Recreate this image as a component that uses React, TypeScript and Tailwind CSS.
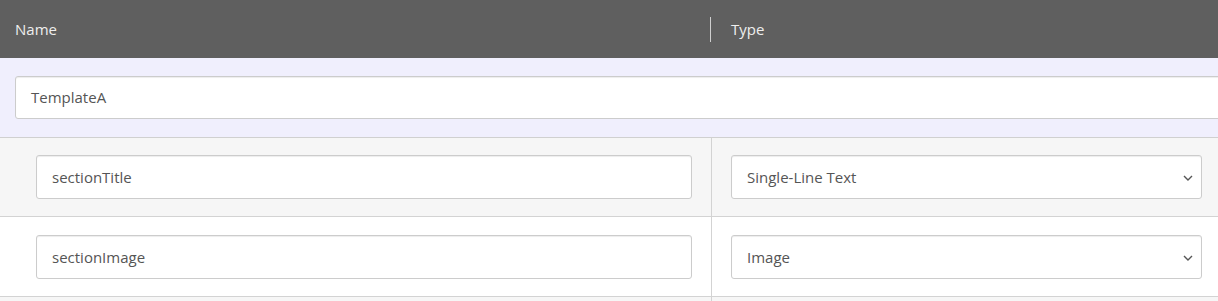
import React from "react";

const font = { fontFamily: '"Open Sans", "Noto Sans", sans-serif' };

function Chevron() {
  return (
    <svg width="10" height="6" viewBox="0 0 10 6" className="absolute right-[8px] top-[19px]">
      <path d="M1 1 L5 5 L9 1" fill="none" stroke="#555" strokeWidth="1.4" />
    </svg>
  );
}

function Row({ name, type, bg, pt, h }: { name: string; type: string; bg: string; pt: string; h: string }) {
  return (
    <div className={`flex ${h} border-b border-[#d3d3d3] ${bg}`}>
      <div className={`w-[711px] shrink-0 pl-[36px] pr-[19px] ${pt}`}>
        <div className="h-[44px] rounded-[3px] border border-[#cccccc] bg-white pl-[15px] flex items-center text-[15px] text-[#555555] shadow-[inset_0_1px_1px_rgba(0,0,0,0.075)]">
          {name}
        </div>
      </div>
      <div className={`flex-1 border-l border-[#d3d3d3] pl-[19px] ${pt}`}>
        <div className="relative w-[471px] h-[44px] rounded-[3px] border border-[#cccccc] bg-white pl-[15px] flex items-center text-[15px] text-[#555555] shadow-[inset_0_1px_1px_rgba(0,0,0,0.075)]">
          {type}
          <Chevron />
        </div>
      </div>
    </div>
  );
}

export default function App() {
  return (
    <div className="w-[1218px] h-[301px] overflow-hidden bg-[#f6f6f6]" style={font}>
      <div className="h-[58px] bg-[#5f5f5f] flex items-center text-[15px] text-[#eeeeee]">
        <div className="w-[710px] shrink-0 pl-[15px]">Name</div>
        <div className="h-[25px] border-l border-[#cfcfcf] pl-[20px] flex items-center">Type</div>
      </div>
      <div className="h-[80px] bg-[#f0effd] border-b border-[#d0d0d0] pt-[18px] pl-[15px]">
        <div className="w-[1230px] h-[43px] rounded-[3px] border border-[#cccccc] bg-white pl-[15px] flex items-center text-[15px] text-[#555555] shadow-[inset_0_1px_1px_rgba(0,0,0,0.075)]">
          TemplateA
        </div>
      </div>
      <Row name="sectionTitle" type="Single-Line Text" bg="bg-[#f6f6f6]" pt="pt-[17px]" h="h-[79px]" />
      <Row name="sectionImage" type="Image" bg="bg-white" pt="pt-[18px]" h="h-[80px]" />
      <div className="flex h-[40px] bg-[#f6f6f6]">
        <div className="w-[711px] shrink-0" />
        <div className="flex-1 border-l border-[#d3d3d3]" />
      </div>
    </div>
  );
}
